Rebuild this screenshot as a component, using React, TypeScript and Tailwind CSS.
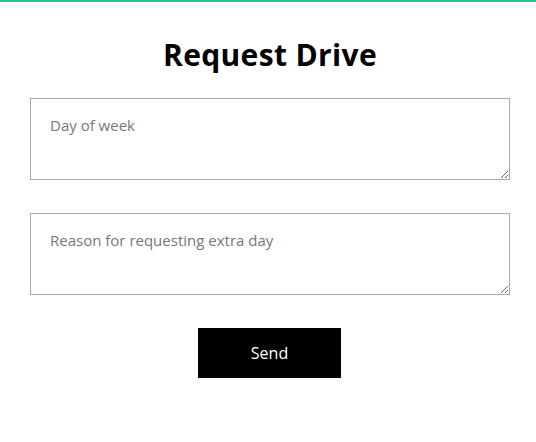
export default function App() {
    return (
        <div className="min-h-[442px] bg-white font-['Open_Sans',sans-serif]">
            <div className="h-[2px] bg-[#2bbf96]" />
            <form
                className="ml-[30px] flex w-[480px] flex-col items-center pt-[30px]"
                onSubmit={(e) => e.preventDefault()}
            >
                <h1 className="text-[30px] leading-[45px] font-bold tracking-[0.35px] text-black">
                    Request Drive
                </h1>
                <textarea
                    className="mt-[21px] h-[82px] w-full border border-[#a9a9a9] px-[19px] py-[16px] text-[15px] leading-[21px] text-black outline-none placeholder:text-[#777]"
                    placeholder="Day of week"
                />
                <textarea
                    className="mt-[33px] h-[82px] w-full border border-[#a9a9a9] px-[19px] py-[16px] text-[15px] leading-[21px] text-black outline-none placeholder:text-[#777]"
                    placeholder="Reason for requesting extra day"
                />
                <button
                    type="submit"
                    className="mt-[33px] ml-[168px] h-[50px] w-[143px] self-start bg-black text-[16px] text-white"
                >
                    Send
                </button>
            </form>
        </div>
    );
}
